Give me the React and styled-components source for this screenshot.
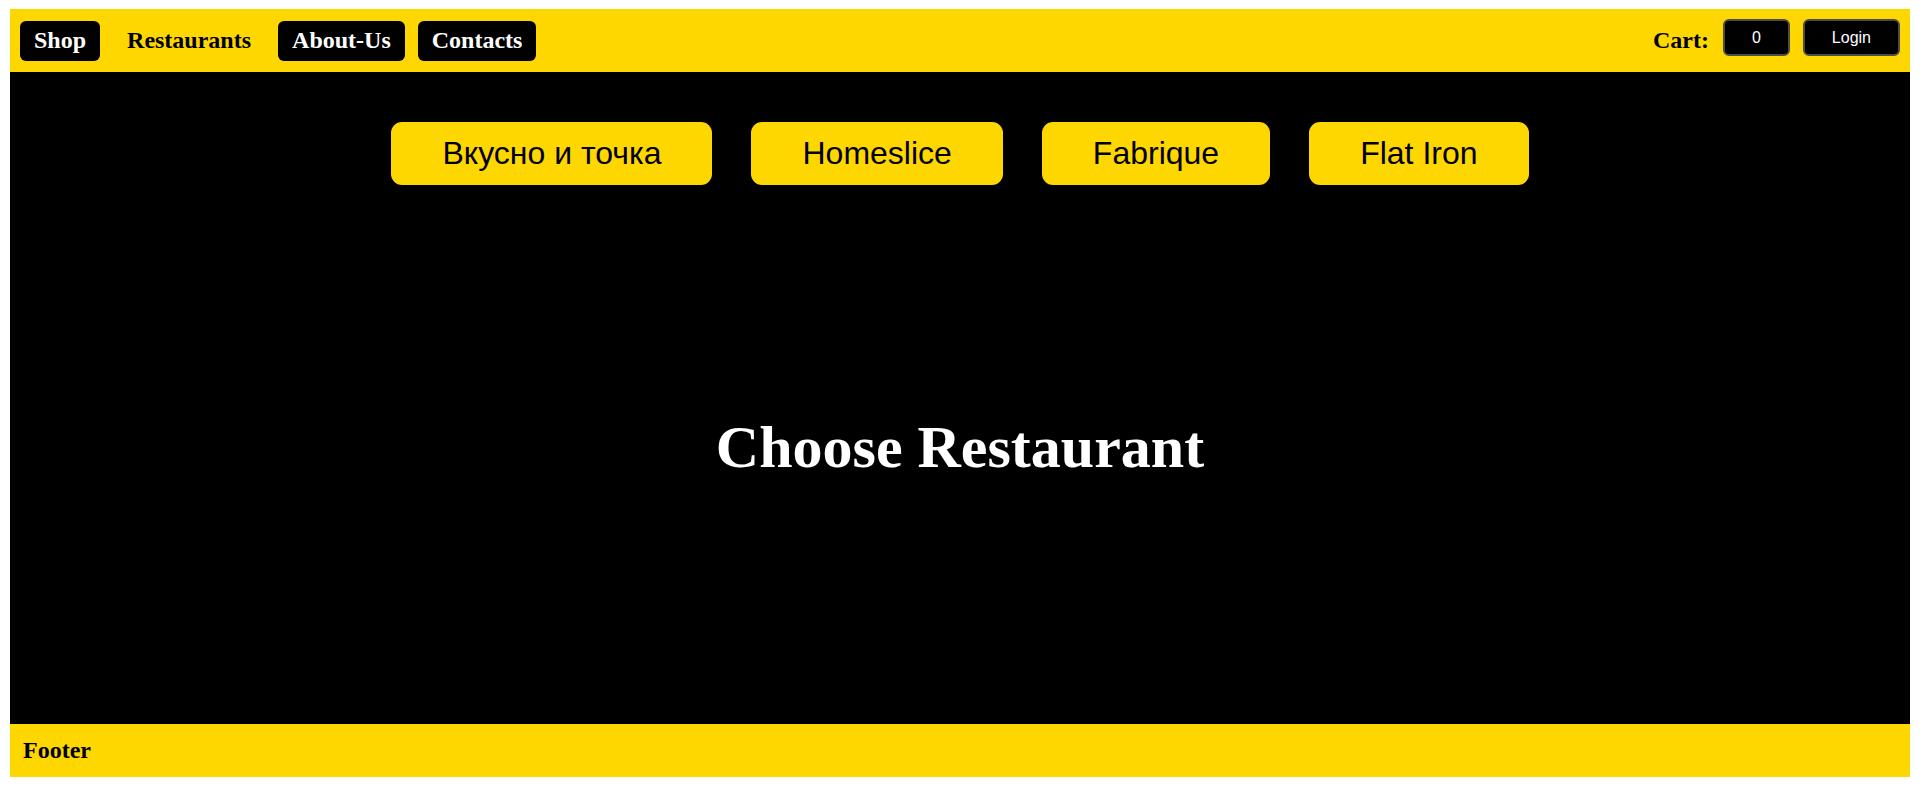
import { useState } from "react";
import styled, { createGlobalStyle } from "styled-components";

const GlobalStyle = createGlobalStyle`
  body {
    margin: 9px 10px 10px;
    font-family: "Liberation Serif", "Times New Roman", serif;
  }
`;

const Page = styled.div`
  display: flex;
  flex-direction: column;
  height: 768px;
`;

const Header = styled.header`
  display: flex;
  align-items: center;
  justify-content: space-between;
  height: 63px;
  padding: 0 10px;
  background-color: #ffd700;
`;

const Nav = styled.nav`
  display: flex;
  align-items: center;
  gap: 13px;
`;

const NavLink = styled.a`
  display: flex;
  align-items: center;
  height: 40px;
  padding: 0 14px;
  border-radius: 6px;
  font-size: 24px;
  font-weight: bold;
  text-decoration: none;
  cursor: pointer;
  color: ${(p) => (p.$active ? "#000" : "#fff")};
  background-color: ${(p) => (p.$active ? "transparent" : "#000")};
`;

const UserBox = styled.div`
  display: flex;
  align-items: center;
  gap: 13px;
  padding-bottom: 6px;
`;

const CartLabel = styled.span`
  font-size: 24px;
  font-weight: bold;
  margin-right: 1px;
  margin-top: 6px;
`;

const SmallButton = styled.button`
  height: 37px;
  padding: 0 27px;
  border: 2px solid #4d4d4d;
  border-radius: 6px;
  background-color: #000;
  color: #fff;
  font-family: "Liberation Sans", Arial, sans-serif;
  font-size: 16px;
  cursor: pointer;
`;

const Main = styled.main`
  flex: 1;
  display: flex;
  flex-direction: column;
  background-color: #000;
`;

const Tabs = styled.div`
  display: flex;
  justify-content: center;
  gap: 39px;
  margin-top: 50px;
`;

const TabButton = styled.button`
  height: 63px;
  padding: 0 51px;
  border: none;
  border-radius: 11px;
  background-color: #ffd700;
  color: #000;
  font-family: "Liberation Sans", Arial, sans-serif;
  font-size: 32px;
  cursor: pointer;

  &:hover {
    background-color: #ffe033;
  }
`;

const Content = styled.div`
  flex: 1;
  display: flex;
  align-items: center;
  justify-content: center;
  padding-bottom: 14px;
`;

const Title = styled.h1`
  margin: 0;
  color: #fff;
  font-size: 60px;
  font-weight: bold;
`;

const Footer = styled.footer`
  display: flex;
  align-items: center;
  height: 53px;
  padding: 0 13px;
  background-color: #ffd700;
  font-size: 24px;
  font-weight: bold;
`;

const RESTAURANTS = ["Вкусно и точка", "Homeslice", "Fabrique", "Flat Iron"];

const App = () => {
  const [cart] = useState(0);
  const [selected, setSelected] = useState(null);

  return (
    <Page>
      <GlobalStyle />
      <Header>
        <Nav>
          <NavLink>Shop</NavLink>
          <NavLink $active>Restaurants</NavLink>
          <NavLink>About-Us</NavLink>
          <NavLink>Contacts</NavLink>
        </Nav>
        <UserBox>
          <CartLabel>Cart:</CartLabel>
          <SmallButton>{cart}</SmallButton>
          <SmallButton>Login</SmallButton>
        </UserBox>
      </Header>
      <Main>
        <Tabs>
          {RESTAURANTS.map((name) => (
            <TabButton key={name} onClick={() => setSelected(name)}>
              {name}
            </TabButton>
          ))}
        </Tabs>
        <Content>
          <Title>{selected ? selected : "Choose Restaurant"}</Title>
        </Content>
      </Main>
      <Footer>Footer</Footer>
    </Page>
  );
};

export default App;
